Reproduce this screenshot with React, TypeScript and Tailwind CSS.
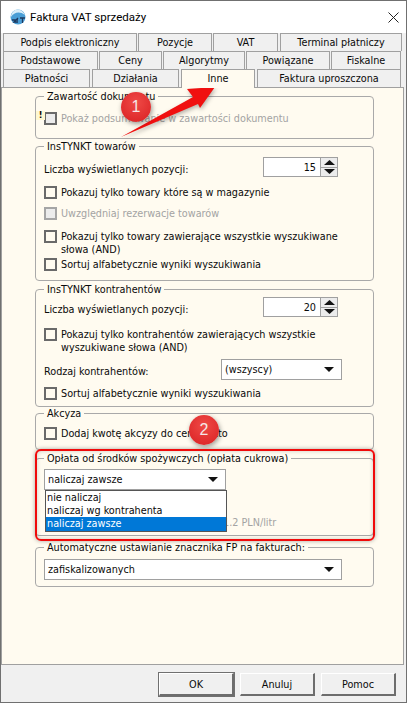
import React from "react";

const FONT = "font-['DejaVu_Sans_Condensed','DejaVu_Sans',sans-serif] [font-stretch:condensed] text-[10.75px] leading-[13px] text-[#0a0a0a]";

const tabRows = [
  [
    { label: "Podpis elektroniczny", w: "w-[134px]", ml: "" },
    { label: "Pozycje", w: "w-[74px]", ml: "ml-[1px]" },
    { label: "VAT", w: "w-[65px]", ml: "ml-[1px]" },
    { label: "Terminal płatniczy", w: "w-[122px]", ml: "ml-[2px]" },
  ],
  [
    { label: "Podstawowe", w: "w-[95px]", ml: "" },
    { label: "Ceny", w: "w-[63px]", ml: "ml-[1px]" },
    { label: "Algorytmy", w: "w-[82px]", ml: "ml-[1px]" },
    { label: "Powiązane", w: "w-[84px]", ml: "ml-[1px]" },
    { label: "Fiskalne", w: "w-[70px]", ml: "ml-[1px]" },
  ],
  [
    { label: "Płatności", w: "w-[87px]", ml: "" },
    { label: "Działania", w: "w-[87px]", ml: "ml-[2px]" },
    { label: "Inne", w: "w-[74px]", ml: "ml-[2px]", active: true },
    { label: "Faktura uproszczona", w: "w-[144px]", ml: "ml-[2px]" },
  ],
];

function CheckRow({
  text,
  disabled,
  dark,
  className = "",
}: {
  text: React.ReactNode;
  disabled?: boolean;
  dark?: boolean;
  className?: string;
}) {
  return (
    <div className={`flex gap-[4px] ${className}`}>
      <span
        className={`block w-[13px] h-[13px] shrink-0 border-2 ${
          disabled ? `bg-[#ececec] ${dark ? "border-[#6a6a6a]" : "border-[#a5a5a5]"}` : "border-[#6a6a6a] bg-[#fffbf0]"
        }`}
      />
      <span className={`whitespace-nowrap ${disabled ? "text-[#a3a3a3]" : ""}`}>{text}</span>
    </div>
  );
}

function Group({ title, height, mt, children }: { title: string; height: string; mt: string; children: React.ReactNode }) {
  return (
    <fieldset className={`${height} ${mt} w-[339px] ml-[33px] border border-[#a9a9a9] rounded-[4px] pl-[8px] pr-0 m-0 min-w-0`}>
      <legend className="ml-0 px-[3px] leading-[13px] whitespace-nowrap">{title}</legend>
      {children}
    </fieldset>
  );
}

function Spin({ value }: { value: number }) {
  return (
    <div className="flex w-[75px] h-[20px] border border-[#a0a0a0] bg-white">
      <div className="flex-1 text-right pr-[4px] pt-[3px]">{value}</div>
      <div className="w-[17px] flex flex-col border-l border-[#a0a0a0] bg-[#ececec]">
        <div className="flex-1 flex items-center justify-center border-b border-[#a0a0a0]">
          <svg width="11" height="5" viewBox="0 0 11 5"><path d="M5.5 0 11 5H0Z" fill="#111" /></svg>
        </div>
        <div className="flex-1 flex items-center justify-center">
          <svg width="11" height="5" viewBox="0 0 11 5"><path d="M0 0H11L5.500 5Z" fill="#111" /></svg>
        </div>
      </div>
    </div>
  );
}

function Select({ value, className }: { value: string; className: string }) {
  return (
    <div className={`flex items-center justify-between h-[21px] border border-[#a0a0a0] bg-white pl-[3px] pr-[7px] ${className}`}>
      <span>{value}</span>
      <svg width="10" height="5" viewBox="0 0 10 5"><path d="M0 0H10L5 5Z" fill="#111" /></svg>
    </div>
  );
}

function Badge({ n, className }: { n: number; className: string }) {
  return (
    <div
      className={`absolute w-[30px] h-[30px] rounded-full bg-[radial-gradient(circle_at_50%_35%,#ef4a46,#d91f22)] text-[#f5e6e6] text-[16px] leading-[30px] text-center shadow-[1px_2px_5px_rgba(0,0,0,0.4)] font-['Liberation_Sans',Arial,sans-serif] ${className}`}
    >
      {n}
    </div>
  );
}

export default function App() {
  return (
    <div className={`relative w-[407px] h-[703px] overflow-hidden bg-[#f0f0f0] border border-[#707070] ${FONT}`}>
      {/* title bar */}
      <div className="flex items-center h-[32px] bg-white pl-[9px]">
        <svg width="16" height="16" viewBox="0 0 16 16">
          <circle cx="8" cy="8" r="7.5" fill="#4a9ed6" />
          <path d="M1 8C4 3 10 2 15 6 13 1.500 9 .5 8 .5 4 .5 1 4 1 8Z" fill="#d9edf8" />
          <path d="M2 11h6M8 9 4 13h4M10 9h5M12.500 9v5" stroke="#1e3a60" strokeWidth="1.3" fill="none" />
        </svg>
        <span className="ml-[4px] font-['Roboto',sans-serif] [font-stretch:normal] text-[11.5px] text-black">Faktura VAT sprzedaży</span>
        <svg className="ml-auto mr-[7px]" width="11" height="11" viewBox="0 0 11 11">
          <path d="M.5.5 10.5 10.5M10.5.5.5 10.5" stroke="#222" strokeWidth="1" />
        </svg>
      </div>

      {/* tabs */}
      <div className="pl-[2px]">
        {tabRows.map((row, i) => (
          <div key={i} className="flex h-[18px]">
            {row.map((t) => (
              <div
                key={t.label}
                className={`${t.w} ${t.ml} text-center border border-b-0 border-[#a0a0a0] pt-[2px] whitespace-nowrap ${
                  t.active ? "relative z-10 h-[19px] bg-[#fffbf0]" : "h-[18px] bg-[#f0f0f0]"
                }`}
              >
                {t.label}
              </div>
            ))}
          </div>
        ))}
      </div>

      {/* page */}
      <div className="h-[578px] bg-[#fffbf0] border border-[#a0a0a0] mr-[2px] pt-[2px]">
        <Group title="Zawartość dokumentu" height="h-[49px]" mt="mt-0">
          <CheckRow disabled dark className="mt-[9px]" text="Pokaż podsumowanie w zawartości dokumentu" />
        </Group>

        <Group title="InsTYNKT towarów" height="h-[141px]" mt="mt-[1px]">
          <div className="flex items-center justify-between w-[294px] mt-[4px]">
            <span className="pt-[4px]">Liczba wyświetlanych pozycji:</span>
            <Spin value={15} />
          </div>
          <CheckRow className="mt-[9px]" text="Pokazuj tylko towary które są w magazynie" />
          <CheckRow className="mt-[8px]" disabled text="Uwzględniaj rezerwacje towarów" />
          <CheckRow className="mt-[10px]" text={<>Pokazuj tylko towary zawierające wszystkie wyszukiwane<br />słowa (AND)</>} />
          <CheckRow className="mt-[2px]" text="Sortuj alfabetycznie wyniki wyszukiwania" />
        </Group>

        <Group title="InsTYNKT kontrahentów" height="h-[124px]" mt="mt-[2px]">
          <div className="flex items-center justify-between w-[294px] mt-[1px]">
            <span className="pt-[4px]">Liczba wyświetlanych pozycji:</span>
            <Spin value={20} />
          </div>
          <CheckRow className="mt-[11px]" text={<>Pokazuj tylko kontrahentów zawierających wszystkie<br />wyszukiwane słowa (AND)</>} />
          <div className="flex items-center justify-between w-[298px] mt-[5px]">
            <span className="pt-[4px]">Rodzaj kontrahentów:</span>
            <Select value="(wszyscy)" className="w-[121px]" />
          </div>
          <CheckRow className="mt-[7px]" text="Sortuj alfabetycznie wyniki wyszukiwania" />
        </Group>

        <Group title="Akcyza" height="h-[43px]" mt="mt-0">
          <CheckRow className="mt-[7px]" text="Dodaj kwotę akcyzy do ceny netto" />
        </Group>

        <div className="relative">
          <Group title="Opłata od środków spożywczych (opłata cukrowa)" height="h-[84px]" mt="mt-[2px]">
            <Select value="naliczaj zawsze" className="w-[182px] mt-[4px]" />
            <div className="mt-[26px] ml-[179px] text-[#a3a3a3]">1.2 PLN/litr</div>
            {/* open dropdown */}
            <div className="absolute left-[43px] top-[38px] w-[182px] border border-[#555] bg-white z-10">
              <div className="h-[13px] pl-[1px]">nie naliczaj</div>
              <div className="h-[13px] pl-[1px]">naliczaj wg kontrahenta</div>
              <div className="h-[14px] pl-[1px] bg-[#0078d7] text-white">naliczaj zawsze</div>
            </div>
          </Group>
        </div>

        <Group title="Automatyczne ustawianie znacznika FP na fakturach:" height="h-[46px]" mt="mt-[5px]">
          <Select value="zafiskalizowanych" className="w-[298px] mt-[5px]" />
        </Group>
      </div>

      {/* buttons */}
      <div className="flex justify-end gap-[6px] pr-[10px] mt-[8px]">
        {["OK", "Anuluj", "Pomoc"].map((b, i) => (
          <button
            key={b}
            className={`w-[75px] h-[23px] bg-[#f0f0f0] border border-t-white border-l-white border-[#6d6d6d] border-b-2 border-r-2 ${
              i === 0 ? "outline outline-[#707070]" : ""
            }`}
          >
            {b}
          </button>
        ))}
      </div>

      {/* annotations */}
      <svg className="absolute left-0 top-0 pointer-events-none drop-shadow-[1px_2px_2px_rgba(0,0,0,0.3)]" width="407" height="703" viewBox="0 0 407 703">
        <path d="M214 86 186 88 192 96 120 136 197 103 199 107Z" fill="#f01010" />
      </svg>
      <Badge n={1} className="left-[120px] top-[91px]" />
      <Badge n={2} className="left-[188px] top-[414px]" />
      <div className="absolute left-[34px] top-[448px] w-[340px] h-[92px] border-2 border-[#f00a0a] rounded-[6px] shadow-[0_0_4px_rgba(0,0,0,0.35),inset_0_0_4px_rgba(0,0,0,0.2)] pointer-events-none" />

      {/* warning marker */}
      <div className="absolute left-[35px] top-[110px] w-[9px] h-[9px] bg-[#fff8d0] text-center text-[9px] leading-[9px] font-bold text-black">!</div>
    </div>
  );
}
